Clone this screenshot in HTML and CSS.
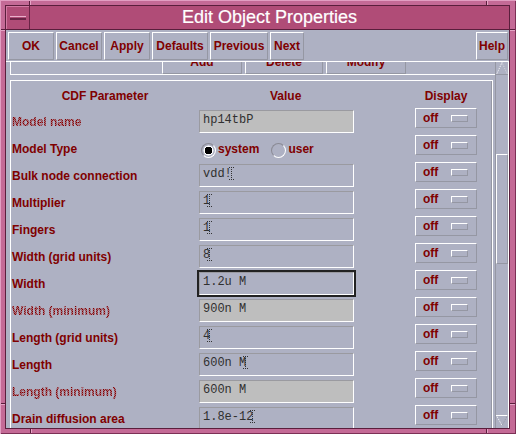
FILE: index.html
```html
<!DOCTYPE html>
<html>
<head>
<meta charset="utf-8">
<title>Edit Object Properties</title>
<link rel="stylesheet" href="styles.css">
</head>
<body>
<div class="wm">
  <div class="win">
    <div class="titlebar">
      <div class="menubtn"><span class="minus"></span></div>
      <div class="title">Edit Object Properties</div>
    </div>
    <div class="client">
      <div class="toolbar">
        <div class="tb w46">OK</div>
        <div class="tb w46">Cancel</div>
        <div class="tb w46">Apply</div>
        <div class="tb w56">Defaults</div>
        <div class="tb w58">Previous</div>
        <div class="tb w34">Next</div>
        <div class="tb w32 help">Help</div>
      </div>
      <div class="scrollwin">
        <div class="viewport">
          <div class="group1">
            <div class="gbtn w80">Add</div>
            <div class="gbtn w78">Delete</div>
            <div class="gbtn w80">Modify</div>
          </div>
          <div class="group2">
            <div class="hdr">
              <div class="c-label hcenter">CDF Parameter</div>
              <div class="c-value hvalue">Value</div>
              <div class="c-disp hcenter">Display</div>
            </div>

            <div class="row">
              <div class="c-label"><span class="stip">Model name</span></div>
              <div class="c-value"><div class="field dis">hp14tbP</div></div>
              <div class="c-disp"><div class="dbtn">off<span class="ind"></span></div></div>
            </div>

            <div class="row">
              <div class="c-label">Model Type</div>
              <div class="c-value">
                <div class="radios">
                  <span class="radio on"></span><span class="rlabel">system</span>
                  <span class="radio r2"></span><span class="rlabel">user</span>
                </div>
              </div>
              <div class="c-disp"><div class="dbtn">off<span class="ind"></span></div></div>
            </div>

            <div class="row">
              <div class="c-label">Bulk node connection</div>
              <div class="c-value"><div class="field">vdd!<span class="caret"></span></div></div>
              <div class="c-disp"><div class="dbtn">off<span class="ind"></span></div></div>
            </div>

            <div class="row">
              <div class="c-label">Multiplier</div>
              <div class="c-value"><div class="field">1<span class="caret"></span></div></div>
              <div class="c-disp"><div class="dbtn">off<span class="ind"></span></div></div>
            </div>

            <div class="row">
              <div class="c-label">Fingers</div>
              <div class="c-value"><div class="field">1<span class="caret"></span></div></div>
              <div class="c-disp"><div class="dbtn">off<span class="ind"></span></div></div>
            </div>

            <div class="row">
              <div class="c-label">Width (grid units)</div>
              <div class="c-value"><div class="field">8<span class="caret"></span></div></div>
              <div class="c-disp"><div class="dbtn">off<span class="ind"></span></div></div>
            </div>

            <div class="row">
              <div class="c-label">Width</div>
              <div class="c-value"><div class="field focus">1.2u M</div></div>
              <div class="c-disp"><div class="dbtn">off<span class="ind"></span></div></div>
            </div>

            <div class="row">
              <div class="c-label"><span class="stip">Width (minimum)</span></div>
              <div class="c-value"><div class="field dis">900n M</div></div>
              <div class="c-disp"><div class="dbtn">off<span class="ind"></span></div></div>
            </div>

            <div class="row">
              <div class="c-label">Length (grid units)</div>
              <div class="c-value"><div class="field">4<span class="caret"></span></div></div>
              <div class="c-disp"><div class="dbtn">off<span class="ind"></span></div></div>
            </div>

            <div class="row">
              <div class="c-label">Length</div>
              <div class="c-value"><div class="field">600n M<span class="caret"></span></div></div>
              <div class="c-disp"><div class="dbtn">off<span class="ind"></span></div></div>
            </div>

            <div class="row">
              <div class="c-label"><span class="stip">Length (minimum)</span></div>
              <div class="c-value"><div class="field dis">600n M</div></div>
              <div class="c-disp"><div class="dbtn">off<span class="ind"></span></div></div>
            </div>

            <div class="row">
              <div class="c-label">Drain diffusion area</div>
              <div class="c-value"><div class="field">1.8e-12<span class="caret"></span></div></div>
              <div class="c-disp"><div class="dbtn">off<span class="ind"></span></div></div>
            </div>
          </div>
        </div>
        <div class="sb">
          <svg class="arrow" width="12" height="13" viewBox="0 0 12 13">
            <line x1="6" y1="0.5" x2="0.5" y2="12.5" stroke="#ffffff" stroke-width="1" stroke-dasharray="1 1"/>
            <line x1="6" y1="0.5" x2="11.5" y2="12.5" stroke="#d8d8e0" stroke-width="1" stroke-dasharray="1 1"/>
            <line x1="0" y1="12.5" x2="12" y2="12.5" stroke="#9597a3" stroke-width="1"/>
          </svg>
          <div class="trough"><div class="thumb"></div></div>
          <svg class="arrow down" width="12" height="11" viewBox="0 0 12 11">
            <line x1="0" y1="0.5" x2="12" y2="0.5" stroke="#ffffff" stroke-width="1"/>
            <line x1="0.5" y1="0.5" x2="6" y2="10.5" stroke="#ffffff" stroke-width="1" stroke-dasharray="1 1"/>
            <line x1="11.5" y1="0.5" x2="6" y2="10.5" stroke="#9597a3" stroke-width="1" stroke-dasharray="1 1"/>
          </svg>
        </div>
      </div>
    </div>
  </div>
</div>
</body>
</html>
```

FILE: styles.css
```css
* { box-sizing: border-box; }
html, body { margin: 0; padding: 0; }
body {
  width: 516px;
  height: 434px;
  overflow: hidden;
  font-family: "Liberation Sans", Arial, sans-serif;
  background: #c46a96;
}

/* window-manager frame */
.wm {
  width: 516px;
  height: 434px;
  padding: 5px 6px 5px 5px;
  background-color: #c46a96;
  background-image:
    linear-gradient(to right, #5a1e3c 0 1px, #e6a4c6 1px 2px),
    linear-gradient(to right, #5a1e3c 0 1px, #e6a4c6 1px 2px),
    linear-gradient(to right, #5a1e3c 0 1px, #e6a4c6 1px 2px),
    linear-gradient(to right, #5a1e3c 0 1px, #e6a4c6 1px 2px),
    linear-gradient(#5a1e3c 0 1px, #e6a4c6 1px 2px),
    linear-gradient(#5a1e3c 0 1px, #e6a4c6 1px 2px),
    linear-gradient(#5a1e3c 0 1px, #e6a4c6 1px 2px),
    linear-gradient(#5a1e3c 0 1px, #e6a4c6 1px 2px);
  background-size: 2px 5px, 2px 5px, 2px 5px, 2px 5px, 5px 2px, 5px 2px, 6px 2px, 6px 2px;
  background-position: 29px 0, 486px 0, 30px 429px, 486px 429px, 0 29px, 0 403px, 510px 29px, 510px 403px;
  background-repeat: no-repeat;
  box-shadow: inset 1px 1px 0 #e29ec2, inset -1px -1px 0 #7c3056;
}
.win {
  height: 100%;
  border: 1px solid #5a1e3c;
  display: flex;
  flex-direction: column;
  background: #aeb1c3;
}

/* title bar */
.titlebar {
  height: 24px;
  flex: none;
  display: flex;
  background: #b04c77;
  border-bottom: 1px solid #5a1e3c;
}
.menubtn {
  width: 24px;
  height: 23px;
  border-right: 1px solid #6a2446;
  box-shadow: inset 1px 1px 0 #d27aa3;
  display: flex;
  align-items: center;
  justify-content: center;
}
.minus {
  width: 16px;
  height: 4px;
  background: #b04c77;
  border-top: 1px solid #eab0cc;
  border-bottom: 2px solid #6a2446;
}
.title {
  flex: 1;
  text-align: center;
  color: #ffffff;
  font-size: 18px;
  line-height: 23px;
  -webkit-text-stroke: 0.2px #ffffff;
}

/* client area */
.client {
  flex: 1;
  display: flex;
  flex-direction: column;
  min-height: 0;
}
.toolbar {
  height: 31px;
  flex: none;
  display: flex;
  gap: 2px;
  padding: 2px 1px 0 2px;
}
.tb, .gbtn {
  height: 28px;
  border: 1px solid;
  border-color: #ffffff #9597a3 #9597a3 #ffffff;
  color: #800000;
  font-weight: bold;
  font-size: 12px;
  display: flex;
  align-items: center;
  justify-content: center;
  white-space: nowrap;
}
.w32 { width: 32px; }
.w34 { width: 34px; }
.w46 { width: 46px; }
.w56 { width: 56px; }
.w58 { width: 58px; }
.w78 { width: 78px; }
.w80 { width: 80px; }
.help { margin-left: auto; }

.scrollwin {
  flex: 1;
  min-height: 0;
  display: flex;
  border-top: 1px solid #ffffff;
}
.viewport {
  width: 489px;
  overflow: hidden;
  padding-left: 4px;
}

/* first (scrolled away) group */
.group1 {
  margin-top: -18px;
  height: 31px;
  border-left: 1px solid #ffffff;
  border-bottom: 1px solid #ffffff;
  display: flex;
  align-items: flex-end;
  gap: 3px;
  padding-left: 151px;
}
.gbtn {
  height: 24px;
  line-height: 22px;
  align-items: flex-start;
}

/* parameter group */
.group2 {
  margin-top: 5px;
  width: 483px;
  border-top: 1px solid #ffffff;
  border-left: 1px solid #ffffff;
  border-right: 1px solid #ffffff;
  box-shadow: inset -1px 0 0 #9597a3;
  color: #800000;
  font-weight: bold;
  font-size: 12px;
}
.hdr, .row {
  display: flex;
}
.hdr {
  height: 26px;
  padding-top: 4px;
  line-height: 22px;
}
.row { height: 27px; }
.c-label {
  width: 188px;
  flex: none;
  padding-left: 1px;
  padding-top: 4px;
  line-height: 23px;
  white-space: nowrap;
}
.c-value {
  width: 216px;
  flex: none;
}
.c-disp {
  width: 62px;
  flex: none;
}
.hcenter { text-align: center; padding-left: 0; padding-top: 0; line-height: 22px; }
.hvalue { padding-left: 71px; }

.stip {
  background: repeating-conic-gradient(#800000 0 25%, #a8606c 0 50%) 0 0 / 2px 2px;
  -webkit-background-clip: text;
  background-clip: text;
  color: transparent;
}

.field {
  margin-top: 3px;
  width: 155px;
  height: 23px;
  border: 1px solid;
  border-color: #9a9aa0 #ffffff #ffffff #9a9aa0;
  font-family: "Liberation Mono", "Courier New", monospace;
  font-weight: normal;
  font-size: 12px;
  line-height: 18px;
  color: #303030;
  padding-left: 3px;
  white-space: pre;
}
.field.dis { background: #bebebe; }
.field.focus { outline: 2px solid #222222; }

.caret {
  display: inline-block;
  width: 5px;
  height: 13px;
  margin-left: -3px;
  vertical-align: -3px;
  background:
    repeating-linear-gradient(to right, #333 0 1px, transparent 1px 2px) 0 0 / 5px 1px no-repeat,
    repeating-linear-gradient(to right, #333 0 1px, transparent 1px 2px) 0 100% / 5px 1px no-repeat,
    repeating-linear-gradient(to bottom, #333 0 1px, transparent 1px 2px) 2px 0 / 1px 100% no-repeat;
}

.radios {
  margin-top: 3px;
  height: 23px;
  display: flex;
  align-items: flex-start;
  padding-left: 2px;
  padding-top: 1px;
  line-height: 23px;
}
.radio {
  width: 15px;
  height: 15px;
  margin-top: 5px;
  border-radius: 50%;
  border: 1px solid;
  border-color: #8a8a94 #ffffff #ffffff #8a8a94;
  flex: none;
}
.radio.on {
  background: radial-gradient(circle, #000000 0 3.6px, #ffffff 4px 4.8px, transparent 5.2px);
}
.radio.r2 { margin-left: 12px; }
.rlabel { margin-left: 2px; }

.dbtn {
  margin-top: 1px;
  width: 62px;
  height: 20px;
  border: 1px solid;
  border-color: #ffffff #9597a3 #9597a3 #ffffff;
  display: flex;
  align-items: center;
  justify-content: space-between;
  padding-left: 7px;
  padding-right: 8px;
  line-height: 18px;
}
.ind {
  width: 17px;
  height: 7px;
  border: 1px solid;
  border-color: #ffffff #9597a3 #9597a3 #ffffff;
}

/* scrollbar */
.sb {
  width: 14px;
  flex: none;
  border-left: 1px solid #9597a3;
  border-right: 1px solid #ffffff;
  display: flex;
  flex-direction: column;
}
.arrow { display: block; flex: none; }
.arrow.down { margin-bottom: 2px; }
.trough { flex: 1; }
.thumb {
  margin-top: 79px;
  height: 110px;
  border: 1px solid;
  border-color: #ffffff #9597a3 #9597a3 #ffffff;
}
```
